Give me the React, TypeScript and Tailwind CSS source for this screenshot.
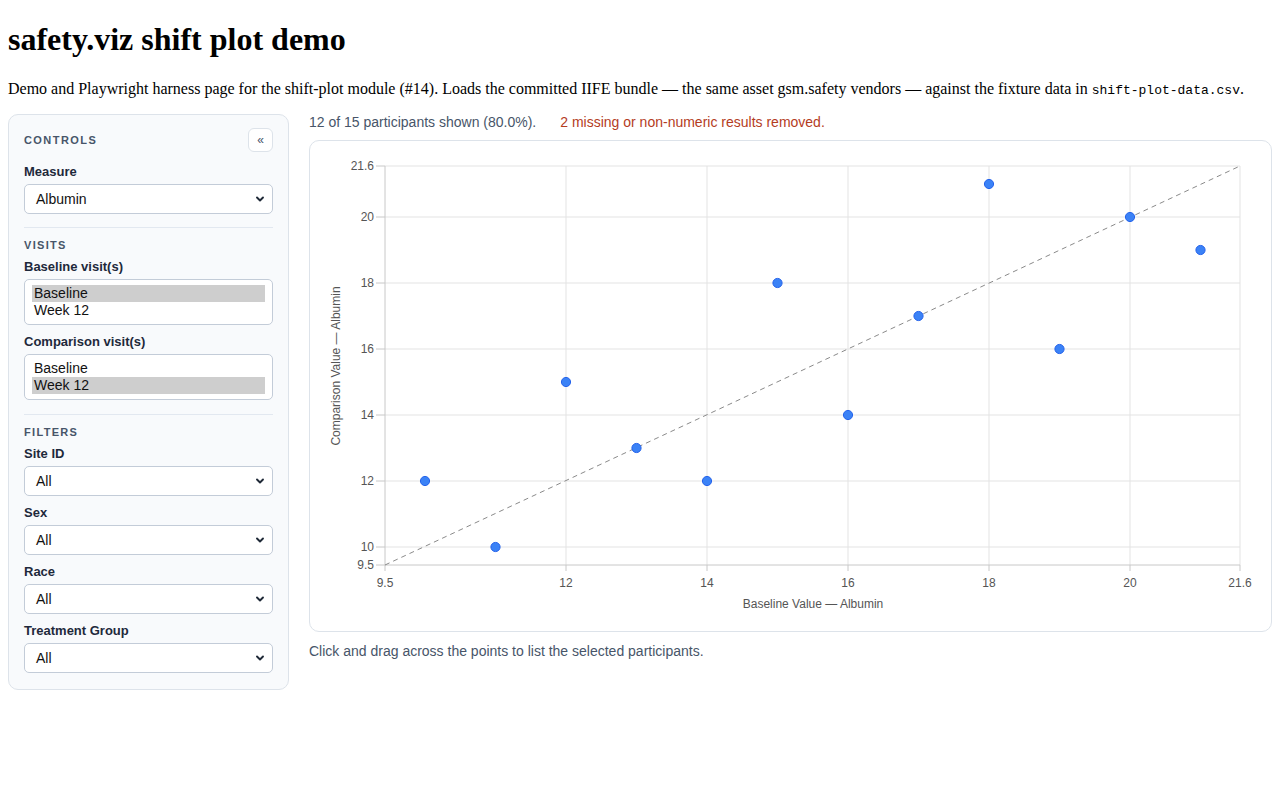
import { ReactNode } from 'react'

const SANS = "font-['Liberation_Sans',Arial,sans-serif]"

// plot geometry in svg coords (svg origin = card inner top-left)
const X0 = 75
const X1 = 930
const Y0 = 25
const Y1 = 424
const sx = (v: number) => 256 + (v - 12) * 70.5
const sy = (v: number) => 406 - (v - 10) * 33

const X_TICKS: [string, number][] = [
  ['9.5', X0],
  ['12', sx(12)],
  ['14', sx(14)],
  ['16', sx(16)],
  ['18', sx(18)],
  ['20', sx(20)],
  ['21.6', X1],
]
const Y_TICKS: [string, number][] = [
  ['21.6', Y0],
  ['20', sy(20)],
  ['18', sy(18)],
  ['16', sy(16)],
  ['14', sy(14)],
  ['12', sy(12)],
  ['10', sy(10)],
  ['9.5', Y1],
]

const POINTS: [number, number][] = [
  [10, 12],
  [11, 10],
  [12, 15],
  [13, 13],
  [14, 12],
  [15, 18],
  [16, 14],
  [17, 17],
  [18, 21],
  [19, 16],
  [20, 20],
  [21, 19],
]

function Chevron() {
  return (
    <svg
      className="pointer-events-none absolute right-[7px] top-1/2 -translate-y-1/2"
      width="10"
      height="10"
      viewBox="0 0 10 10"
    >
      <path d="M2 3.5 L5 6.5 L8 3.5" fill="none" stroke="#1f2937" strokeWidth="1.9" strokeLinecap="round" strokeLinejoin="round" />
    </svg>
  )
}

function Select({ value }: { value: string }) {
  return (
    <div className="relative mt-1 flex h-[30px] items-center rounded-[5px] border border-[#c3ccd8] bg-white pl-[11px] text-[14px] text-[#111]">
      {value}
      <Chevron />
    </div>
  )
}

function Field({ label, children, first }: { label: string; children: ReactNode; first?: boolean }) {
  return (
    <div className={first ? '' : 'mt-[9px]'}>
      <div className="text-[13px] font-semibold leading-4 text-[#1e293b]">{label}</div>
      {children}
    </div>
  )
}

function MultiSelect({ options, selected }: { options: string[]; selected: string }) {
  return (
    <div className="mt-1 rounded-[5px] border border-[#c3ccd8] bg-white px-[7px] py-[5px] text-[14px] text-[#111]">
      {options.map((o) => (
        <div key={o} className={`h-[17px] pl-0.5 leading-[17px] ${o === selected ? 'bg-[#cecece]' : ''}`}>
          {o}
        </div>
      ))}
    </div>
  )
}

function SectionTitle({ children }: { children: ReactNode }) {
  return <div className="mt-2.5 text-[11px] font-bold leading-[14px] tracking-[0.12em] text-[#475569]">{children}</div>
}

function Sidebar() {
  return (
    <aside className={`w-[281px] shrink-0 rounded-[10px] border border-[#dde3ea] bg-[#f8fafc] px-[15px] pb-4 pt-[13px] ${SANS}`}>
      <div className="flex h-6 items-center justify-between">
        <span className="text-[11px] font-bold tracking-[0.13em] text-[#475569]">CONTROLS</span>
        <button className="flex h-6 w-[25px] items-center justify-center rounded-md border border-[#dde3ea] bg-white text-[12px] text-[#475569]">
          «
        </button>
      </div>
      <div className="mt-[12px]">
        <Field label="Measure" first>
          <Select value="Albumin" />
        </Field>
      </div>
      <div className="mt-[13px] border-t border-[#e2e8f0]" />
      <SectionTitle>VISITS</SectionTitle>
      <div className="mt-[7px]">
        <Field label="Baseline visit(s)" first>
          <MultiSelect options={['Baseline', 'Week 12']} selected="Baseline" />
        </Field>
        <Field label="Comparison visit(s)">
          <MultiSelect options={['Baseline', 'Week 12']} selected="Week 12" />
        </Field>
      </div>
      <div className="mt-[14px] border-t border-[#e2e8f0]" />
      <SectionTitle>FILTERS</SectionTitle>
      <div className="mt-[7px]">
        <Field label="Site ID" first>
          <Select value="All" />
        </Field>
        <Field label="Sex">
          <Select value="All" />
        </Field>
        <Field label="Race">
          <Select value="All" />
        </Field>
        <Field label="Treatment Group">
          <Select value="All" />
        </Field>
      </div>
    </aside>
  )
}

function ShiftPlot() {
  const font = 'Liberation Sans, Arial, sans-serif'
  return (
    <svg width="961" height="490" viewBox="0 0 961 490" className="block">
      {/* grid */}
      {X_TICKS.slice(1).map(([l, x]) => (
        <line key={'gx' + l} x1={x} x2={x} y1={Y0} y2={Y1} stroke="#e3e3e3" />
      ))}
      {Y_TICKS.slice(0, -1).map(([l, y]) => (
        <line key={'gy' + l} x1={X0} x2={X1} y1={y} y2={y} stroke="#e3e3e3" />
      ))}
      {/* axes */}
      <line x1={X0} x2={X0} y1={Y0} y2={Y1 + 6} stroke="#c8c8c8" />
      <line x1={X0 - 9} x2={X1} y1={Y1} y2={Y1} stroke="#c8c8c8" />
      {X_TICKS.slice(1).map(([l, x]) => (
        <line key={'tx' + l} x1={x} x2={x} y1={Y1} y2={Y1 + 6} stroke="#c8c8c8" />
      ))}
      {Y_TICKS.slice(0, -1).map(([l, y]) => (
        <line key={'ty' + l} x1={X0 - 9} x2={X0} y1={y} y2={y} stroke="#c8c8c8" />
      ))}
      {/* tick labels */}
      {X_TICKS.map(([l, x]) => (
        <text key={'lx' + l} x={x} y={Y1 + 22} textAnchor="middle" fontSize="12" fill="#555" fontFamily={font}>
          {l}
        </text>
      ))}
      {Y_TICKS.map(([l, y]) => (
        <text key={'ly' + l} x={X0 - 11} y={y + 4} textAnchor="end" fontSize="12" fill="#555" fontFamily={font}>
          {l}
        </text>
      ))}
      {/* identity line */}
      <line x1={X0} y1={Y1} x2={X1} y2={Y0} stroke="#8a8a8a" strokeDasharray="5 4" />
      {/* points */}
      {POINTS.map(([bx, cy], i) => (
        <circle key={i} cx={sx(bx)} cy={sy(cy)} r="4.6" fill="#3b82f6" stroke="#2563eb" strokeWidth="1" />
      ))}
      {/* axis titles */}
      <text x={503} y={467} textAnchor="middle" fontSize="12" fill="#555" fontFamily={font}>
        Baseline Value — Albumin
      </text>
      <text
        x={27}
        y={225}
        textAnchor="middle"
        fontSize="12"
        fill="#555"
        fontFamily={font}
        transform="rotate(-90 27 225)"
        dominantBaseline="middle"
      >
        Comparison Value — Albumin
      </text>
    </svg>
  )
}

export default function App() {
  return (
    <div className="min-h-screen bg-white px-2 font-['Liberation_Serif','Times_New_Roman',serif] text-black">
      <h1 className="mb-[21px] pt-[21px] text-[32px] font-bold leading-[37px]">safety.viz shift plot demo</h1>
      <p className="mb-4 text-base leading-[19px]">
        Demo and Playwright harness page for the shift-plot module (#14). Loads the committed IIFE bundle — the same
        asset gsm.safety vendors — against the fixture data in{' '}
        <code className="font-['Liberation_Mono','Courier_New',monospace] text-[13px] leading-none">shift-plot-data.csv</code>.
      </p>
      <div className="flex items-start gap-5">
        <Sidebar />
        <main className={`min-w-0 flex-1 ${SANS}`}>
          <div className="flex gap-6 text-[14px] leading-4">
            <span className="text-[#475569]">12 of 15 participants shown (80.0%).</span>
            <span className="text-[#b43c1e]">2 missing or non-numeric results removed.</span>
          </div>
          <div className="mt-[10px] overflow-hidden rounded-[10px] border border-[#dde3ea] bg-white">
            <ShiftPlot />
          </div>
          <p className="mt-[11px] text-[14px] leading-4 text-[#475569]">
            Click and drag across the points to list the selected participants.
          </p>
        </main>
      </div>
    </div>
  )
}
